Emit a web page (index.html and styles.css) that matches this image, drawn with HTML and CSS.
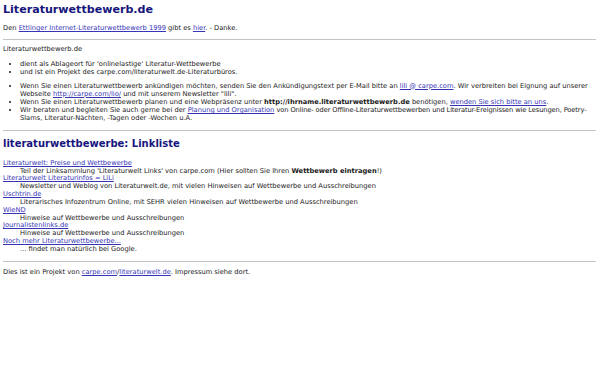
FILE: index.html
```html
<!DOCTYPE html>
<html lang="de">
<head>
  <meta charset="UTF-8" />
  <title>Literaturwettbewerb.de</title>
  <link rel="stylesheet" href="styles.css">
</head>
<body>

<h1>Literaturwettbewerb.de</h1>
<p class="intro">Den <a href="#">Ettlinger Internet-Literaturwettbewerb 1999</a> gibt es <a href="#">hier</a>. - Danke.</p>

<hr class="rule-top" />

<p class="site-name">Literaturwettbewerb.de</p>
<ul class="about">
  <li>dient als Ablageort f&uuml;r 'onlinelastige' Literatur-Wettbewerbe</li>
  <li>und ist ein Projekt des carpe.com/literaturwelt.de-Literaturb&uuml;ros.</li>
</ul>
<ul class="offers">
  <li>Wenn Sie einen Literaturwettbewerb ank&uuml;ndigen m&ouml;chten, senden Sie den Ank&uuml;ndigungstext per E-Mail bitte an <a href="#">lili @ carpe.com</a>. Wir verbreiten bei Eignung auf unserer Webseite <a href="#">http://carpe.com/lio/</a> und mit unserem Newsletter "lili".</li>
  <li>Wenn Sie einen Literaturwettbewerb planen und eine Webpr&auml;senz unter <b>http://ihrname.literaturwettbewerb.de</b> ben&ouml;tigen, <a href="#">wenden Sie sich bitte an uns</a>.</li>
  <li>Wir beraten und begleiten Sie auch gerne bei der <a href="#">Planung und Organisation</a> <span class="tight">von Online- oder Offline-Literaturwettbewerben und Literatur-Ereignissen wie Lesungen, Poetry-</span>Slams, Literatur-N&auml;chten, -Tagen oder -Wochen u.A.</li>
</ul>

<hr class="rule-mid" />

<h2>literaturwettbewerbe: Linkliste</h2>
<dl class="links">
  <dt><a href="#">Literaturwelt: Preise und Wettbewerbe</a></dt>
  <dd>Teil der Linksammlung 'Literaturwelt Links' von carpe.com (Hier sollten Sie Ihren <b>Wettbewerb eintragen</b>!)</dd>
  <dt><a href="#">Literaturwelt Literaturinfos = LiLi</a></dt>
  <dd>Newsletter und Weblog von Literaturwelt.de, mit vielen Hinweisen auf Wettbewerbe und Ausschreibungen</dd>
  <dt><a href="#">Uschtrin.de</a></dt>
  <dd>Literarisches Infozentrum Online, mit SEHR vielen Hinweisen auf Wettbewerbe und Ausschreibungen</dd>
  <dt><a href="#">WieND</a></dt>
  <dd>Hinweise auf Wettbewerbe und Ausschreibungen</dd>
  <dt><a href="#">Journalistenlinks.de</a></dt>
  <dd>Hinweise auf Wettbewerbe und Ausschreibungen</dd>
  <dt><a href="#">Noch mehr Literaturwettbewerbe...</a></dt>
  <dd>... findet man nat&uuml;rlich bei Google.</dd>
</dl>

<hr class="rule-bottom" />

<p class="footer">Dies ist ein Projekt von <a href="#">carpe.com</a>/<a href="#">literaturwelt.de</a>. Impressum siehe dort.</p>

</body>
</html>
```

FILE: styles.css
```css
html, body {
  margin: 0;
  padding: 0;
  background-color: #ffffff;
}

body {
  padding: 4px 3px 0 3px;
  font-family: "DejaVu Sans", Verdana, sans-serif;
  font-size: 6.7px;
  line-height: 8px;
  color: #1a1a1a;
}

a {
  color: #3535b5;
  text-decoration: underline;
}

h1, h2 {
  margin: 0;
  color: #16167e;
  font-weight: bold;
}

h1 {
  font-size: 11.1px;
  line-height: 12px;
  margin-bottom: 8px;
}

h2 {
  font-size: 10px;
  line-height: 12px;
  margin: 7px 0 9.4px;
}

p {
  margin: 0;
}

hr {
  border: 0;
  border-top: 1px solid #c4c4c4;
  height: 0;
  margin: 0;
}

.rule-top {
  margin: 7px 1px 5px 0;
}

.rule-mid {
  margin: 8px 1px 0 0;
}

.rule-bottom {
  margin: 7px 1px 6.3px 0;
}

ul {
  margin: 0;
  padding-left: 17px;
}

.about {
  margin-top: 7px;
}

.offers {
  margin-top: 5.5px;
}

.offers li {
  line-height: 8.15px;
}

/* the original line fits "Poetry-" before the break */
.tight {
  letter-spacing: -0.12px;
}

.links {
  margin: 0;
  line-height: 7.85px;
}

.links dt {
  margin: 0;
}

.links dd {
  margin: 0 0 0 17px;
}
```
